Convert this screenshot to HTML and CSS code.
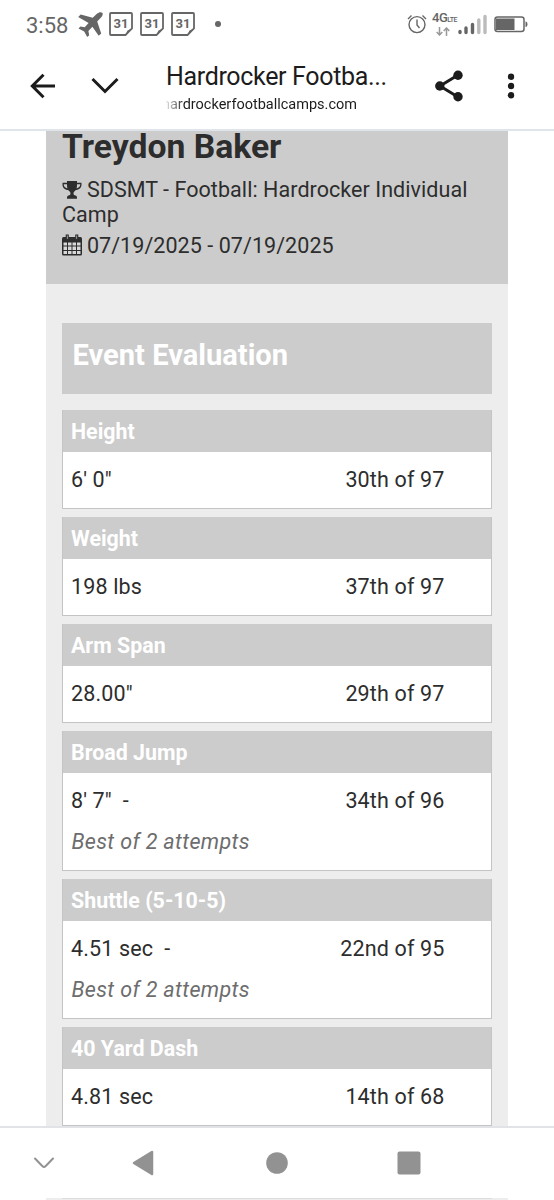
FILE: index.html
```html
<!DOCTYPE html>
<html lang="en">
<head>
  <meta charset="UTF-8">
  <meta name="viewport" content="width=device-width, initial-scale=1.0">
  <title>Hardrocker Football Camps</title>
  <link rel="stylesheet" href="styles.css">
</head>
<body>

  <div class="status-bar">
    <span class="time">3:58</span>
    <svg class="plane" viewBox="0 0 26 25" width="26" height="25">
      <path d="M25.200 0.700c1.200 1.200.2 3.300-1.200 4.800L20.200 9.500l4 11.900-2.500 2.400-6.300-9-4 4.100.8 4.300-2 1.800-3-5.600L1.500 16.500l1.900-2 4.300.7 3.900-4.200L1.200 4.900l2.500-2.500 12 3.300 4.200-4C21.600.2 24-.4 25.200.7z"/>
    </svg>
    <svg class="cal" viewBox="0 0 24 24" width="24" height="24">
      <path d="M2 1h20a1 1 0 0 1 1 1v14.500L16.500 23H2a1 1 0 0 1-1-1V2a1 1 0 0 1 1-1z"/>
      <path d="M16.500 23l2-4.500 4.500-2z" class="fold"/>
      <text x="12" y="16">31</text>
    </svg>
    <svg class="cal" viewBox="0 0 24 24" width="24" height="24">
      <path d="M2 1h20a1 1 0 0 1 1 1v14.500L16.500 23H2a1 1 0 0 1-1-1V2a1 1 0 0 1 1-1z"/>
      <path d="M16.500 23l2-4.500 4.500-2z" class="fold"/>
      <text x="12" y="16">31</text>
    </svg>
    <svg class="cal" viewBox="0 0 24 24" width="24" height="24">
      <path d="M2 1h20a1 1 0 0 1 1 1v14.500L16.500 23H2a1 1 0 0 1-1-1V2a1 1 0 0 1 1-1z"/>
      <path d="M16.500 23l2-4.500 4.500-2z" class="fold"/>
      <text x="12" y="16">31</text>
    </svg>
    <span class="dot"></span>
    <svg class="alarm" viewBox="0 0 20 20" width="20" height="20">
      <circle cx="10" cy="10.600" r="8"/>
      <path d="M10 5.500V11l2.500 3M1 5l3.500-3.500M19 5l-3.500-3.500"/>
    </svg>
    <div class="network">
      <div class="network-type">4G<small>LTE</small></div>
      <svg viewBox="0 0 14 9" width="14" height="9">
        <path d="M3.500 0v7.500M.7 5l2.800 3 2.800-3M10.500 9V1M7.700 4l2.800-3 2.800 3"/>
      </svg>
    </div>
    <svg class="signal" viewBox="0 0 29 21" width="29" height="21">
      <path d="M2 17.500v1M8 14v4.500M14.500 10.500v8"/>
      <path d="M20.800 6v12.500M27 2.500v16" class="off"/>
    </svg>
    <svg class="battery" viewBox="0 0 34 17" width="34" height="17">
      <rect x="1" y="1" width="29" height="14.500" rx="2.500" class="shell"/>
      <rect x="2" y="2.500" width="18.500" height="11.500"/>
      <path d="M31.500 5.500c2.600 0 2.600 5.500 0 5.500z"/>
    </svg>
  </div>

  <div class="toolbar">
    <svg class="back" viewBox="0 0 26 26" width="26" height="26">
      <path d="M25 13H2M13.500 1.800L2.300 13l11.200 11.200"/>
    </svg>
    <svg class="expand" viewBox="0 0 28 18" width="28" height="18">
      <path d="M1.500 2L14 14.500 26.500 2"/>
    </svg>
    <div class="page-info">
      <div class="page-title">Hardrocker Footba...</div>
      <div class="page-url">hardrockerfootballcamps.com</div>
    </div>
    <svg class="share" viewBox="0 0 28 32" width="28" height="32">
      <path d="M23 5L5 16l18 11"/>
      <circle cx="23" cy="5.200" r="4.700"/>
      <circle cx="4.800" cy="16" r="4.700"/>
      <circle cx="23" cy="26.800" r="4.700"/>
    </svg>
    <svg class="more" viewBox="0 0 8 26" width="8" height="26">
      <circle cx="4" cy="3.700" r="3.200"/>
      <circle cx="4" cy="13" r="3.200"/>
      <circle cx="4" cy="22.300" r="3.200"/>
    </svg>
  </div>

  <main class="page">
    <header class="player">
      <h1>Treydon Baker</h1>
      <p><svg class="icon" viewBox="0 0 20 20" width="20" height="20">
        <path d="M5 1h10v1.700h4.500v2c0 3-2.400 5-5.600 5.400-.9 1.200-2.400 1.700-2.400 3.400 0 1.300.8 1.800 2 2.100 1 .3 1.500 1 1.500 2.400v.8H5V18c0-1.400.5-2.100 1.500-2.400 1.200-.3 2-.8 2-2.100 0-1.700-1.500-2.200-2.400-3.400C2.900 9.700.5 7.700.5 4.700v-2H5zM1.800 4.200v.6c0 1.700 1.400 3.100 3.600 3.700C5 7.200 5 5.600 5 4.200zM18.200 4.200H15c0 1.400 0 3-.4 4.300 2.200-.6 3.600-2 3.600-3.700z" fill-rule="evenodd"/>
      </svg> SDSMT - Football: Hardrocker Individual Camp</p>
      <p><svg class="icon" viewBox="0 0 20 22" width="20" height="22">
        <rect x="0" y="3" width="20" height="18.500" rx="1.500"/>
        <path class="cells" d="M1.500 8.500H5v3H1.500zM6 8.500h3.500v3H6zM10.500 8.500H14v3h-3.500zM15 8.500h3.500v3H15zM1.500 12.500H5V16H1.500zM6 12.500h3.500V16H6zM10.500 12.500H14V16h-3.500zM15 12.500h3.500V16H15zM1.500 17H5v3H1.500zM6 17h3.500v3H6zM10.500 17H14v3h-3.500zM15 17h3.500v3H15z"/>
        <path class="rings" d="M4.300 1h1.900v4.500H4.300zM13.800 1h1.900v4.500h-1.900z"/>
      </svg> 07/19/2025 - 07/19/2025</p>
    </header>

    <div class="results">
      <h2>Event Evaluation</h2>

      <div class="event">
        <h3>Height</h3>
        <div class="row"><span>6' 0"</span><span>30th of 97</span></div>
      </div>
      <div class="event">
        <h3>Weight</h3>
        <div class="row"><span>198 lbs</span><span>37th of 97</span></div>
      </div>
      <div class="event">
        <h3>Arm Span</h3>
        <div class="row"><span>28.00"</span><span>29th of 97</span></div>
      </div>
      <div class="event">
        <h3>Broad Jump</h3>
        <div class="row"><span>8' 7" &nbsp;-</span><span>34th of 96</span></div>
        <p class="note">Best of 2 attempts</p>
      </div>
      <div class="event">
        <h3>Shuttle (5-10-5)</h3>
        <div class="row"><span>4.51 sec &nbsp;-</span><span>22nd of 95</span></div>
        <p class="note">Best of 2 attempts</p>
      </div>
      <div class="event">
        <h3>40 Yard Dash</h3>
        <div class="row"><span>4.81 sec</span><span>14th of 68</span></div>
      </div>
    </div>
  </main>

  <nav class="nav-bar">
    <svg class="hide" viewBox="0 0 20 12" width="20" height="12">
      <path d="M1 1.500l7.500 7.700q1.500 1.300 3 0L19 1.500"/>
    </svg>
    <svg viewBox="0 0 22 26" width="22" height="26">
      <path d="M20 2v22L2 13z" stroke="#929292" stroke-width="2.500" stroke-linejoin="round"/>
    </svg>
    <svg viewBox="0 0 22 22" width="22" height="22">
      <circle cx="11" cy="11" r="10.800"/>
    </svg>
    <svg class="recents" viewBox="0 0 24 24" width="24" height="24">
      <rect x="0.500" y="0.500" width="23" height="23" rx="2"/>
    </svg>
  </nav>
  <div class="page-edge"><div></div></div>

</body>
</html>
```
FILE: styles.css
```css
* {
  box-sizing: border-box;
}

body {
  font-family: Roboto, sans-serif;
  background: white;
  color: #2d2d2d;
  margin: 0;
  height: 1200px;
  display: flex;
  flex-direction: column;
  overflow: hidden;
}

svg {
  display: block;
  flex: none;
}

h1, h2, h3, p {
  margin: 0;
}

/* phone status bar */
.status-bar {
  height: 48px;
  display: flex;
  align-items: center;
  padding-left: 26px;
  color: #666;
  fill: #666;
}

.time {
  width: 51px;
  padding-top: 2px;
  font-size: 22px;
  white-space: nowrap;
}

.cal {
  fill: none;
  stroke: #666;
  stroke-width: 1.8;
  margin-left: 7px;
}

.plane + .cal {
  margin-left: 6px;
}

.cal .fold {
  fill: #666;
  stroke: none;
}

.cal text {
  fill: #666;
  stroke: none;
  font-size: 13px;
  font-weight: 700;
  text-anchor: middle;
}

.dot {
  width: 6px;
  height: 6px;
  border-radius: 50%;
  background: #666;
  margin-left: 20px;
}

.alarm {
  fill: none;
  stroke: #666;
  stroke-width: 1.4;
  margin-left: auto;
}

.network {
  width: 24px;
  margin: 0 2px 0 5px;
}

.network-type {
  font-size: 13px;
  font-weight: 500;
  line-height: 11px;
  letter-spacing: -0.5px;
  white-space: nowrap;
}

.network-type small {
  font-size: 7px;
}

.network svg {
  margin: 1px 0 0 4px;
  fill: none;
  stroke: #999;
  stroke-width: 1.5;
}

.signal {
  stroke: #666;
  stroke-width: 3.4;
  stroke-linecap: round;
  margin-top: 1px;
}

.signal .off {
  stroke: #bbb;
}

.battery {
  margin: 0 26px 0 7px;
}

.battery .shell {
  fill: none;
  stroke: #666;
  stroke-width: 1.5;
}

/* browser toolbar */
.toolbar {
  height: 83px;
  display: flex;
  align-items: center;
  padding: 0 39px 5px 30px;
  border-bottom: 2px solid #dfe5ea;
  color: #1c1c1c;
  fill: #1c1c1c;
}

.back, .expand {
  fill: none;
  stroke: #1c1c1c;
  stroke-width: 3;
}

.expand {
  margin-left: 35px;
}

.page-info {
  width: 222px;
  margin-left: 47px;
  padding-top: 5px;
  white-space: nowrap;
}

.page-title {
  font-size: 25px;
  line-height: 32px;
  letter-spacing: -0.33px;
}

.page-url {
  width: 191px;
  display: flex;
  justify-content: flex-end;
  overflow: hidden;
  font-size: 14.5px;
  line-height: 24px;
  -webkit-mask-image: linear-gradient(to right, rgba(0, 0, 0, 0.1), #000 18px);
  mask-image: linear-gradient(to right, rgba(0, 0, 0, 0.1), #000 18px);
}

.share {
  margin-left: 47px;
}

.share path {
  fill: none;
  stroke: #1c1c1c;
  stroke-width: 3;
}

.more {
  margin-left: auto;
}

/* web page */
.page {
  width: 462px;
  height: 995px;
  margin-left: 46px;
  background: #ededed;
  overflow: hidden;
  flex: none;
}

.player {
  height: 153px;
  padding: 0 16px;
  background: #ccc;
  font-size: 21.5px;
  letter-spacing: 0.06px;
}

.player h1 {
  font-size: 33.7px;
  line-height: 32px;
  letter-spacing: 0;
  margin-bottom: 14px;
}

.player p {
  line-height: 25px;
  margin-bottom: 6px;
}

.icon {
  display: inline-block;
  vertical-align: -3px;
  margin-right: -0.5px;
  fill: #2d2d2d;
}

.icon .cells {
  fill: #d8d8d8;
}

.icon .rings {
  stroke: #2d2d2d;
  stroke-width: 1.2;
  fill: #ccc;
}

.results {
  padding: 39px 16px 0;
}

.results h2 {
  height: 71px;
  padding: 15px 10.5px;
  margin-bottom: 16px;
  background: #ccc;
  color: white;
  font-size: 29.1px;
  line-height: 34px;
}

.event {
  margin-bottom: 8.3px;
  height: 98.8px;
  background: white;
  border: 1px solid #c4c4c4;
  border-top: 0;
}

.event:has(.note) {
  height: 139.5px;
}

.event h3 {
  height: 42px;
  padding-left: 8px;
  background: #ccc;
  color: white;
  font-size: 21.4px;
  line-height: 44px;
}

.row {
  display: flex;
  justify-content: space-between;
  padding: 15px 46.5px 0 8px;
  font-size: 21.5px;
  line-height: 26px;
  letter-spacing: 0.15px;
}

.note {
  padding: 15px 8.5px 0;
  color: #6d6d6d;
  font-size: 21.5px;
  line-height: 26px;
  font-style: italic;
  letter-spacing: 0.35px;
}

/* android navigation */
.nav-bar {
  height: 72px;
  display: flex;
  align-items: center;
  padding-left: 34px;
  border-top: 2px solid #e2e3e6;
  fill: #929292;
}

.nav-bar svg + svg {
  margin-left: 112px;
}

.nav-bar .hide {
  fill: none;
  stroke: #929292;
  stroke-width: 2;
  stroke-linecap: round;
}

.nav-bar .hide + svg {
  margin-left: 78px;
}

.nav-bar svg + .recents {
  margin-left: 109px;
}

.page-edge {
  width: 462px;
  height: 2px;
  margin-left: 46px;
  padding: 0 16px;
  background: #ededed;
}

.page-edge div {
  height: 1px;
  background: #ddd;
}
```
